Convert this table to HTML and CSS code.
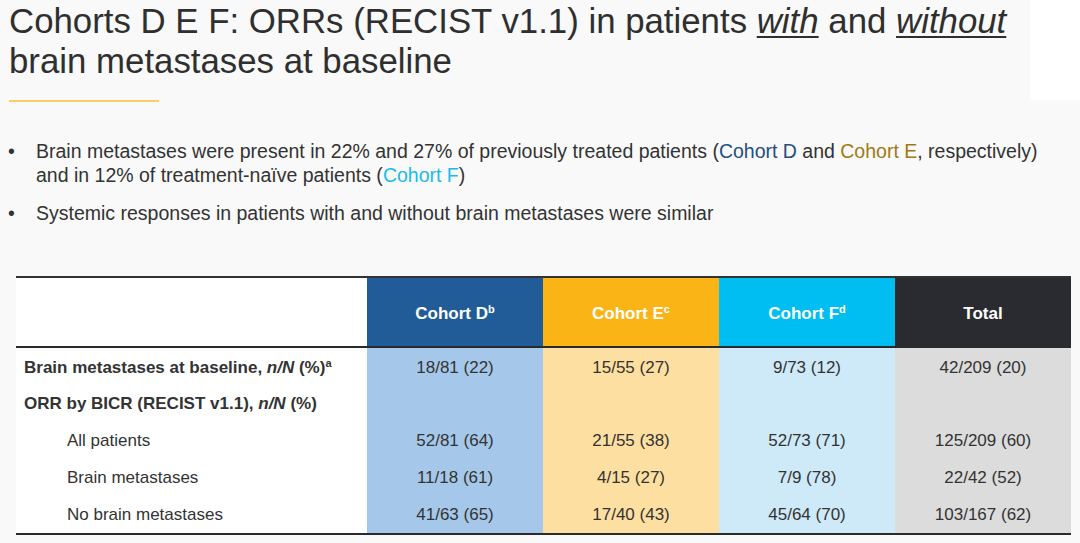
FILE: index.html
```html
<!DOCTYPE html>
<html>
<head>
<meta charset="utf-8">
<link rel="stylesheet" href="styles.css">
</head>
<body>
<div class="slide">
  <div class="corner"></div>
  <h1 class="title">Cohorts D E F: ORRs (RECIST v1.1) in patients <em>with</em> and <em>without</em><br>brain metastases at baseline</h1>
  <div class="accent"></div>
  <ul class="bullets">
    <li><span class="dot">•</span><span class="btext">Brain metastases were present in 22% and 27% of previously treated patients (<span class="cd">Cohort D</span> and <span class="ce">Cohort E</span>, respectively) and in 12% of treatment-naïve patients (<span class="cf">Cohort F</span>)</span></li>
    <li><span class="dot">•</span><span class="btext">Systemic responses in patients with and without brain metastases were similar</span></li>
  </ul>
  <table class="data">
    <colgroup>
      <col class="c-label"><col class="c-num"><col class="c-num"><col class="c-num"><col class="c-tot">
    </colgroup>
    <thead>
      <tr>
        <th class="h-blank"></th>
        <th class="h-d">Cohort D<sup>b</sup></th>
        <th class="h-e">Cohort E<sup>c</sup></th>
        <th class="h-f">Cohort F<sup>d</sup></th>
        <th class="h-t">Total</th>
      </tr>
    </thead>
    <tbody>
      <tr>
        <td class="lab">Brain metastases at baseline, <em>n/N</em> (%)<sup>a</sup></td>
        <td class="d">18/81 (22)</td><td class="e">15/55 (27)</td><td class="f">9/73 (12)</td><td class="t">42/209 (20)</td>
      </tr>
      <tr>
        <td class="lab">ORR by BICR (RECIST v1.1), <em>n/N</em> (%)</td>
        <td class="d"></td><td class="e"></td><td class="f"></td><td class="t"></td>
      </tr>
      <tr>
        <td class="sub">All patients</td>
        <td class="d">52/81 (64)</td><td class="e">21/55 (38)</td><td class="f">52/73 (71)</td><td class="t">125/209 (60)</td>
      </tr>
      <tr>
        <td class="sub">Brain metastases</td>
        <td class="d">11/18 (61)</td><td class="e">4/15 (27)</td><td class="f">7/9 (78)</td><td class="t">22/42 (52)</td>
      </tr>
      <tr>
        <td class="sub">No brain metastases</td>
        <td class="d">41/63 (65)</td><td class="e">17/40 (43)</td><td class="f">45/64 (70)</td><td class="t">103/167 (62)</td>
      </tr>
    </tbody>
  </table>
</div>
</body>
</html>
```

FILE: styles.css
```css
html, body {
  margin: 0;
  padding: 0;
  background: #f9f9f9;
}
.slide {
  position: relative;
  width: 1080px;
  height: 543px;
  overflow: hidden;
  font-family: "Liberation Sans", Arial, sans-serif;
  color: #333333;
  display: flex;
  flex-direction: column;
  align-items: flex-start;
}
.corner {
  position: absolute;
  right: 0;
  top: 0;
  width: 50px;
  height: 100px;
  background: #ffffff;
}
.title {
  position: relative;
  margin: 1px 0 0 9px;
  font-size: 34.8px;
  line-height: 40px;
  font-weight: normal;
  color: #2f2f2f;
  white-space: nowrap;
}
.title em {
  font-style: italic;
  text-decoration: underline;
  text-decoration-thickness: 2px;
  text-underline-offset: 3px;
}
.accent {
  margin: 19px 0 0 9px;
  width: 150px;
  height: 2px;
  background: #f8cd6a;
}
.bullets {
  list-style: none;
  margin: 37px 0 0 0;
  padding: 0;
  font-size: 19.5px;
  line-height: 24px;
  display: flex;
  flex-direction: column;
  gap: 14px;
}
.bullets li {
  display: flex;
}
.dot {
  width: 36px;
  padding-left: 8px;
  box-sizing: border-box;
  flex: none;
}
.btext {
  width: 1035px;
}
.cd { color: #1f4f7f; }
.ce { color: #a07a14; }
.cf { color: #19bce9; }

.data {
  margin: 51px 0 0 16px;
  border-collapse: collapse;
  table-layout: fixed;
  width: 1055px;
  background: #ffffff;
  border-top: 2px solid #333333;
  border-bottom: 2px solid #2a2a2a;
  font-size: 17px;
}
.c-label { width: 351px; }
.c-num { width: 176px; }
.c-tot { width: 176px; }
.data thead tr {
  height: 70px;
  border-bottom: 2px solid #2a2a2a;
}
.data th {
  color: #ffffff;
  font-weight: bold;
  font-size: 17px;
  text-align: center;
  padding: 3px 0 0 0;
}
.data sup {
  font-size: 11px;
  vertical-align: 6px;
  line-height: 0;
}
.h-blank { background: #ffffff; }
.h-d { background: #215c99; }
.h-e { background: #fbb416; }
.h-f { background: #00bdf2; }
.h-t { background: #2a2b30; }
.data td {
  height: 36px;
  padding: 1px 0 0 0;
  text-align: center;
  color: #333333;
  vertical-align: top;
  line-height: 36px;
}
.data td.d { background: #a5c8ea; }
.data td.e { background: #fde0a1; }
.data td.f { background: #ceeaf8; }
.data td.t { background: #dcdcdc; }
.data td.lab {
  text-align: left;
  font-weight: bold;
  padding-left: 8px;
}
.data td.sub {
  text-align: left;
  padding-left: 51px;
}
.data tbody tr:first-child td {
  padding-top: 2px;
  height: 35px;
  line-height: 35px;
}
```
